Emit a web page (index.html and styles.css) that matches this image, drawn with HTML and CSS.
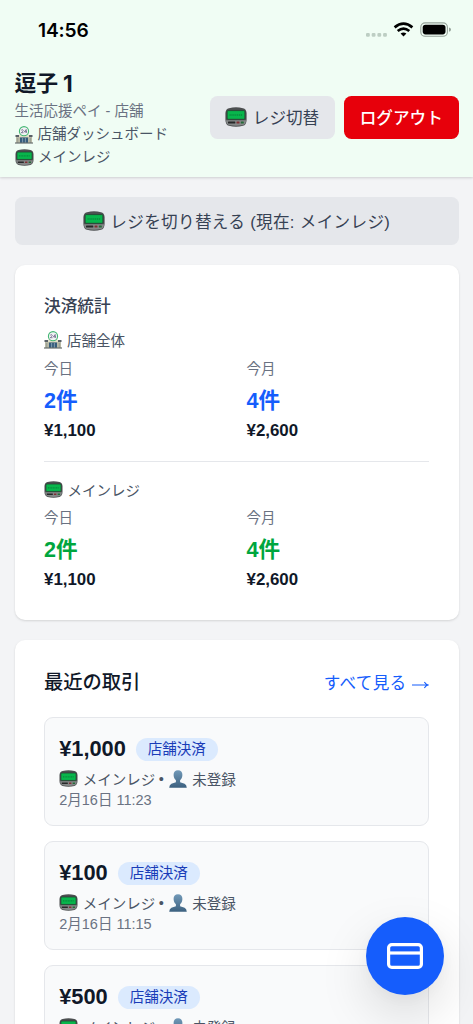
FILE: index.html
```html
<!DOCTYPE html>
<html lang="ja">
<head>
<meta charset="utf-8">
<meta name="viewport" content="width=device-width, initial-scale=1">
<title>店舗ダッシュボード</title>
<link rel="stylesheet" href="styles.css">
</head>
<body>
<svg class="sprite" aria-hidden="true">
  <defs>
    <linearGradient id="bust" x1="0" y1="0" x2="0" y2="1"><stop offset="0" stop-color="#7199b8"/><stop offset="1" stop-color="#3c607f"/></linearGradient>
    <symbol id="pager" viewBox="0 0 22 20">
      <path d="M4 1.2Q11-.7 18 1.2Q21.3 2 21.6 6V13Q21.4 18 18 18.8Q11 20.6 4 18.8Q.6 18 .4 13V6Q.7 2 4 1.2Z" fill="#4c4f50"/>
      <path d="M1 13.2H21Q21 17 18 18Q11 19.5 4 18Q1 17 1 13.2Z" fill="#858888"/>
      <rect x="2.1" y="3.6" width="17.8" height="8.7" rx="1" fill="#08b64c" stroke="#263c30" stroke-width=".8"/>
      <path d="M4.5 8H17.5" stroke="#078c3d" stroke-width="1.5" stroke-dasharray="1.2 .7"/>
      <rect x="3" y="14.6" width="7.3" height="1.8" rx=".5" fill="#262929"/>
      <rect x="11.5" y="14.6" width="3" height="1.8" rx=".5" fill="#812e32"/>
      <rect x="15.8" y="14.6" width="3" height="1.8" rx=".5" fill="#246b38"/>
    </symbol>
    <symbol id="store" viewBox="0 0 18 18">
      <path d="M1 9.5H17V17H1Z" fill="#b8b9a6"/>
      <path d="M.5 9H4V11H.5ZM14 9H17.5V11H14Z" fill="#596168"/>
      <path d="M4 8.5H14V11.2H4Z" fill="#e0dfc7"/>
      <path d="M5 11.5H13V17H5Z" fill="#365d7c"/>
      <path d="M7.6 12V17M10.4 12V17" stroke="#9db5c4" stroke-width=".7"/>
      <path d="M2.7 12V17M15.3 12V17" stroke="#8d968c" stroke-width=".8"/>
      <path d="M0 17H18" stroke="#68706e" stroke-width="1.2"/>
      <circle cx="9" cy="5.2" r="4.6" fill="#f2f2f5" stroke="#43b773" stroke-width="1.1"/>
      <path d="M6.2 4.2Q7.7 3 8.3 4.3Q8 5.4 6.3 6.7H8.5M11.2 7V3.5L9.4 5.8H12" fill="none" stroke="#655d82" stroke-width=".8"/>
    </symbol>
    <symbol id="person" viewBox="0 0 18 18">
      <path d="M9 .3C11.8.3 13.5 2.2 13.4 5.1C13.3 7.5 12.3 9.3 11.1 10.3V12.2L15.6 13.8Q17.6 14.6 17.8 17.8H.2Q.4 14.6 2.4 13.8L6.9 12.2V10.3C5.7 9.3 4.7 7.5 4.6 5.1C4.5 2.2 6.2.3 9 .3Z" fill="url(#bust)"/>
    </symbol>
  </defs>
</svg>

<header class="header">
  <div class="status">
    <span class="clock">14:56</span>
    <svg class="status-icons" viewBox="0 0 86 16" aria-hidden="true">
      <g fill="#bdcec3"><rect x="0" y="10.9" width="3.8" height="3.8" rx="1.2"/><rect x="5.7" y="10.9" width="3.8" height="3.8" rx="1.2"/><rect x="11.4" y="10.9" width="3.8" height="3.8" rx="1.2"/><rect x="17.1" y="10.9" width="3.8" height="3.8" rx="1.2"/></g>
      <g fill="none" stroke="#000" stroke-width="2.7"><path d="M28.6 5.4Q37.5-2 46.4 5.4"/><path d="M31.7 9Q37.5 4.2 43.3 9"/></g>
      <path d="M34.6 11.6Q37.5 9.4 40.4 11.6L37.5 14.6Z"/>
      <rect x="54.8" y=".9" width="26.6" height="13.4" rx="4.4" fill="none" stroke="#94a198" stroke-width="1.1"/>
      <rect x="56.7" y="2.8" width="22.8" height="9.6" rx="2.8"/>
      <path d="M83 5.4Q85 5.8 85 7.6T83 9.8Z" fill="#94a198"/>
    </svg>
  </div>
  <div class="header-row">
    <div class="identity">
      <h1 class="title">逗子<span class="title-number">1</span></h1>
      <p class="sub muted">生活応援ペイ - 店舗</p>
      <p class="sub"><svg class="emoji store"><use href="#store"/></svg>店舗ダッシュボード</p>
      <p class="sub"><svg class="emoji pager"><use href="#pager"/></svg>メインレジ</p>
    </div>
    <div class="actions">
      <button class="btn btn-gray"><svg class="emoji pager-lg"><use href="#pager"/></svg>レジ切替</button>
      <button class="btn btn-red">ログアウト</button>
    </div>
  </div>
</header>

<main class="main">
  <button class="switch"><svg class="emoji pager-lg"><use href="#pager"/></svg>レジを切り替える (現在: メインレジ)</button>

  <section class="card stats">
    <h2 class="stats-title">決済統計</h2>
    <div class="group">
      <h3 class="group-title"><svg class="emoji store"><use href="#store"/></svg>店舗全体</h3>
      <div class="grid">
        <div><p class="label">今日</p><p class="count blue">2件</p><p class="sum">¥1,100</p></div>
        <div><p class="label">今月</p><p class="count blue">4件</p><p class="sum">¥2,600</p></div>
      </div>
    </div>
    <div class="group divided">
      <h3 class="group-title"><svg class="emoji pager"><use href="#pager"/></svg>メインレジ</h3>
      <div class="grid">
        <div><p class="label">今日</p><p class="count green">2件</p><p class="sum">¥1,100</p></div>
        <div><p class="label">今月</p><p class="count green">4件</p><p class="sum">¥2,600</p></div>
      </div>
    </div>
  </section>

  <section class="card recent">
    <div class="recent-head"><h2 class="recent-title">最近の取引</h2><a class="all">すべて見る <svg class="arrow" viewBox="0 0 17 10"><path d="M0 5H15.5M12.4 2Q13.5 4.2 16 5Q13.5 5.8 12.4 8"/></svg></a></div>
    <div class="list">
      <article class="item">
        <div class="item-top"><strong class="amount">¥1,000</strong><span class="badge">店舗決済</span></div>
        <p class="meta"><svg class="emoji pager"><use href="#pager"/></svg>メインレジ<span class="dot">•</span><svg class="emoji person"><use href="#person"/></svg>未登録</p>
        <p class="date">2月16日 11:23</p>
      </article>
      <article class="item">
        <div class="item-top"><strong class="amount">¥100</strong><span class="badge">店舗決済</span></div>
        <p class="meta"><svg class="emoji pager"><use href="#pager"/></svg>メインレジ<span class="dot">•</span><svg class="emoji person"><use href="#person"/></svg>未登録</p>
        <p class="date">2月16日 11:15</p>
      </article>
      <article class="item">
        <div class="item-top"><strong class="amount">¥500</strong><span class="badge">店舗決済</span></div>
        <p class="meta"><svg class="emoji pager"><use href="#pager"/></svg>メインレジ<span class="dot">•</span><svg class="emoji person"><use href="#person"/></svg>未登録</p>
      </article>
    </div>
  </section>
</main>

<button class="fab" aria-label="決済"><svg viewBox="0 0 36 26"><rect x="1.6" y="1.6" width="32.8" height="22.8" rx="3.2"/><path d="M2 10H34"/></svg></button>
</body>
</html>
```
FILE: styles.css
```css
* { box-sizing: border-box; margin: 0; padding: 0; }
html, body { height: 1024px; overflow: hidden; }
body {
  background: #f3f4f6;
  color: #101828;
  font-family: "Liberation Sans", "Noto Sans CJK JP", sans-serif;
  font-size: 14.5px;
  font-weight: 400;
}
button { border: 0; font-family: inherit; }
.sprite { position: absolute; width: 0; height: 0; }
.emoji { display: block; flex: none; }
.store { width: 18px; height: 18px; margin-right: 5px; }
.pager { width: 19px; height: 17px; margin-right: 4.5px; }
.pager-lg { width: 22px; height: 20px; margin-right: 6px; }
.person { width: 18px; height: 18px; margin-right: 5px; }

.header {
  position: relative;
  height: 177px;
  background: #f0fdf4;
  box-shadow: 0 1px 3px rgba(0, 0, 0, .1), 0 1px 2px rgba(0, 0, 0, .06);
}
.status { display: flex; justify-content: space-between; align-items: center; height: 60px; padding: 0 21px 0 38px; }
.clock { font: 600 19.2px/24px Inter, sans-serif; color: #000; letter-spacing: -.15px; }
.status-icons { width: 86px; height: 16px; }
.header-row { display: flex; justify-content: space-between; align-items: center; height: 117px; padding: 0 14.5px 2px 14.5px; }
.identity { padding-top: 3px; }
.title { display: flex; gap: 5px; height: 31px; font-size: 21.8px; line-height: 29px; font-weight: 700; }
.title-number { font-family: Inter, sans-serif; font-size: 22.5px; }
.sub { display: flex; align-items: center; height: 23px; line-height: 23px; color: #4a5565; white-space: pre; }
.muted { color: #6a7282; }
.actions { display: flex; gap: 9.5px; }
.btn { display: flex; align-items: center; justify-content: center; height: 43.5px; padding-bottom: 2px; border-radius: 7.5px; font-size: 16.6px; font-weight: 500; white-space: nowrap; }
.btn-gray { width: 125px; background: #e5e7eb; color: #364153; font-weight: 400; }
.btn-red { width: 114.5px; background: #e7000b; color: #fff; }

.main { display: flex; flex-direction: column; gap: 20px; padding: 19.6px 14.5px 0; }
.switch { display: flex; align-items: center; justify-content: center; flex: none; height: 48px; border-radius: 7.5px; background: #e5e7eb; color: #364153; font-size: 16.6px; letter-spacing: .33px; font-weight: 400; }
.switch .emoji { margin-right: 5.5px; }
.card { flex: none; background: #fff; border-radius: 10px; box-shadow: 0 1px 3px rgba(0, 0, 0, .08), 0 1px 2px rgba(0, 0, 0, .06); }
.stats { height: 355px; padding: 30.5px 29.5px 0; }
.stats-title { font-size: 16.7px; line-height: 24px; font-weight: 500; color: #364153; }
.group { padding-top: 8.5px; }
.divided { margin-top: 18px; border-top: 1px solid #e5e7eb; padding-top: 15.5px; }
.group-title { display: flex; align-items: center; height: 24px; font-size: 14.5px; font-weight: 400; color: #4a5565; }
.grid { display: grid; grid-template-columns: 1fr 1fr; column-gap: 20px; padding-top: 6px; }
.label { line-height: 23px; color: #6a7282; }
.count { height: 38px; line-height: 39px; font-size: 21.6px; font-weight: 700; }
.blue { color: #155dfc; }
.green { color: #00a63e; }
.sum { font-size: 16.9px; line-height: 24px; font-weight: 700; }

.recent { height: 500px; padding: 28px 29.5px; }
.recent-head { display: flex; justify-content: space-between; align-items: center; height: 30px; }
.recent-title { font-size: 19.3px; line-height: 30px; font-weight: 500; }
.all { display: flex; align-items: center; gap: 5.5px; font-size: 16.6px; letter-spacing: .3px; line-height: 28px; padding-top: 2px; color: #155dfc; white-space: nowrap; }
.arrow { width: 17px; height: 10px; margin-top: 2px; fill: none; stroke: currentColor; stroke-width: 1.1; }
.list { display: flex; flex-direction: column; gap: 15px; padding-top: 19.4px; }
.item { flex: none; height: 109px; padding: 16.5px 14.2px; border: 1px solid #e5e7eb; border-radius: 9px; background: #f9fafb; }
.item-top { display: flex; align-items: center; gap: 10px; height: 30px; }
.amount { font-size: 21.8px; line-height: 30px; }
.badge { height: 23px; padding: 0 12px; border-radius: 12px; background: #dbeafe; color: #193cb8; font-size: 14.5px; line-height: 22px; font-weight: 400; }
.meta { display: flex; align-items: center; height: 23px; margin-top: 3px; color: #4a5565; white-space: pre; }
.dot { width: 12px; text-align: center; margin-right: 2px; }
.date { line-height: 20px; color: #6a7282; }

/* floating payment button */
.fab { position: fixed; left: 366px; top: 917px; display: flex; align-items: center; justify-content: center; width: 78px; height: 78px; border-radius: 50%; background: #155dfc; box-shadow: 0 20px 50px rgba(0, 0, 0, .13), 0 4px 20px rgba(0, 0, 0, .04); }
.fab svg { width: 36px; height: 26px; fill: none; stroke: #fff; stroke-width: 3.2; }
```
